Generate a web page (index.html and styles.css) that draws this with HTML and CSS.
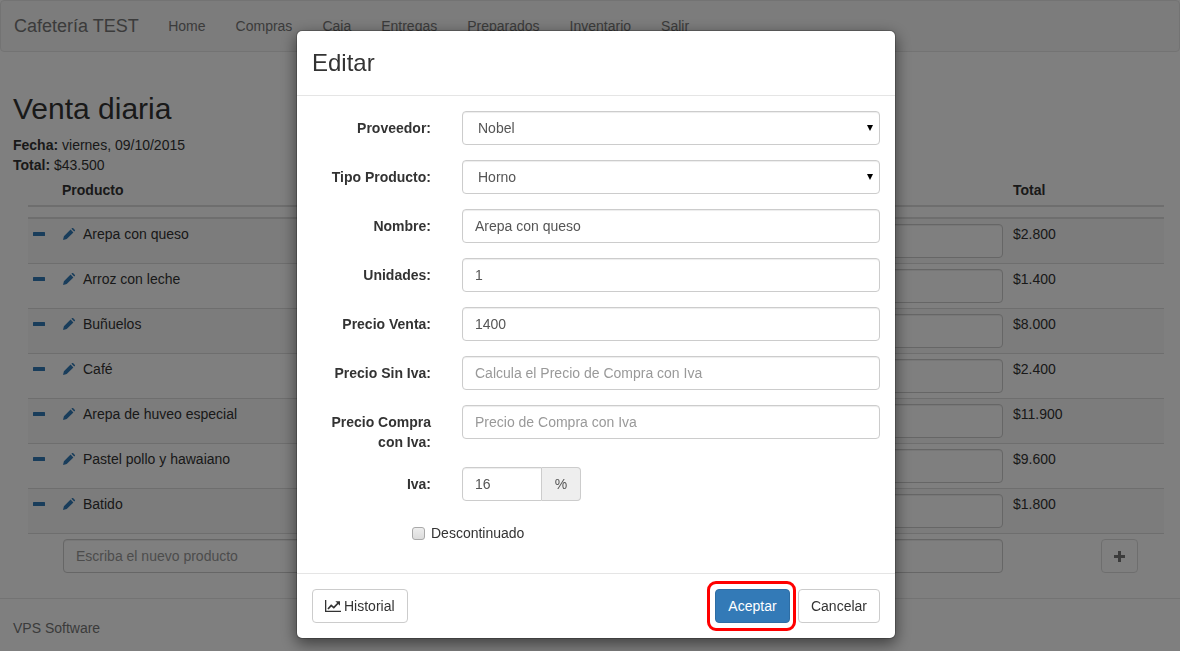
FILE: index.html
```html
<!DOCTYPE html>
<html lang="es">
<head>
<meta charset="utf-8">
<title>Venta diaria</title>
<link rel="stylesheet" href="styles.css">
</head>
<body>
<nav class="navbar">
  <a class="brand">Cafetería TEST</a>
  <ul class="nav">
    <li>Home</li><li>Compras</li><li>Caja</li><li>Entregas</li><li>Preparados</li><li>Inventario</li><li>Salir</li>
  </ul>
</nav>
<main class="content">
  <h1>Venta diaria</h1>
  <div class="meta"><b>Fecha:</b> viernes, 09/10/2015</div>
  <div class="meta"><b>Total:</b> $43.500</div>
  <table class="sales">
    <colgroup><col class="c-action"><col class="c-name"><col class="c-qty"><col class="c-total"></colgroup>
    <thead>
      <tr><th></th><th>Producto</th><th></th><th>Total</th></tr>
    </thead>
    <tbody>
      <tr class="spacer"><td colspan="4"></td></tr>
      <tr class="item first">
        <td><svg class="minus" viewBox="0 0 12 4"><rect width="12" height="4" rx=".5"/></svg></td>
        <td><svg class="pencil" viewBox="0 0 12 12"><path d="M0 12l.9-3.7L7.6 1.6l2.8 2.8-6.7 6.7zM8.4.8l.5-.5a1 1 0 0 1 1.4 0l1.4 1.4a1 1 0 0 1 0 1.4l-.5.5z"/></svg><span class="name">Arepa con queso</span></td>
        <td><input class="control" type="text"></td>
        <td>$2.800</td>
      </tr>
      <tr class="item">
        <td><svg class="minus" viewBox="0 0 12 4"><rect width="12" height="4" rx=".5"/></svg></td>
        <td><svg class="pencil" viewBox="0 0 12 12"><path d="M0 12l.9-3.7L7.6 1.6l2.8 2.8-6.7 6.7zM8.4.8l.5-.5a1 1 0 0 1 1.4 0l1.4 1.4a1 1 0 0 1 0 1.4l-.5.5z"/></svg><span class="name">Arroz con leche</span></td>
        <td><input class="control" type="text"></td>
        <td>$1.400</td>
      </tr>
      <tr class="item">
        <td><svg class="minus" viewBox="0 0 12 4"><rect width="12" height="4" rx=".5"/></svg></td>
        <td><svg class="pencil" viewBox="0 0 12 12"><path d="M0 12l.9-3.7L7.6 1.6l2.8 2.8-6.7 6.7zM8.4.8l.5-.5a1 1 0 0 1 1.4 0l1.4 1.4a1 1 0 0 1 0 1.4l-.5.5z"/></svg><span class="name">Buñuelos</span></td>
        <td><input class="control" type="text"></td>
        <td>$8.000</td>
      </tr>
      <tr class="item">
        <td><svg class="minus" viewBox="0 0 12 4"><rect width="12" height="4" rx=".5"/></svg></td>
        <td><svg class="pencil" viewBox="0 0 12 12"><path d="M0 12l.9-3.7L7.6 1.6l2.8 2.8-6.7 6.7zM8.4.8l.5-.5a1 1 0 0 1 1.4 0l1.4 1.4a1 1 0 0 1 0 1.4l-.5.5z"/></svg><span class="name">Café</span></td>
        <td><input class="control" type="text"></td>
        <td>$2.400</td>
      </tr>
      <tr class="item">
        <td><svg class="minus" viewBox="0 0 12 4"><rect width="12" height="4" rx=".5"/></svg></td>
        <td><svg class="pencil" viewBox="0 0 12 12"><path d="M0 12l.9-3.7L7.6 1.6l2.8 2.8-6.7 6.7zM8.4.8l.5-.5a1 1 0 0 1 1.4 0l1.4 1.4a1 1 0 0 1 0 1.4l-.5.5z"/></svg><span class="name">Arepa de huveo especial</span></td>
        <td><input class="control" type="text"></td>
        <td>$11.900</td>
      </tr>
      <tr class="item">
        <td><svg class="minus" viewBox="0 0 12 4"><rect width="12" height="4" rx=".5"/></svg></td>
        <td><svg class="pencil" viewBox="0 0 12 12"><path d="M0 12l.9-3.7L7.6 1.6l2.8 2.8-6.7 6.7zM8.4.8l.5-.5a1 1 0 0 1 1.4 0l1.4 1.4a1 1 0 0 1 0 1.4l-.5.5z"/></svg><span class="name">Pastel pollo y hawaiano</span></td>
        <td><input class="control" type="text"></td>
        <td>$9.600</td>
      </tr>
      <tr class="item">
        <td><svg class="minus" viewBox="0 0 12 4"><rect width="12" height="4" rx=".5"/></svg></td>
        <td><svg class="pencil" viewBox="0 0 12 12"><path d="M0 12l.9-3.7L7.6 1.6l2.8 2.8-6.7 6.7zM8.4.8l.5-.5a1 1 0 0 1 1.4 0l1.4 1.4a1 1 0 0 1 0 1.4l-.5.5z"/></svg><span class="name">Batido</span></td>
        <td><input class="control" type="text"></td>
        <td>$1.800</td>
      </tr>
      <tr class="add">
        <td></td>
        <td colspan="2" class="add-cell"><input class="control" type="text" placeholder="Escriba el nuevo producto"></td>
        <td><button class="btn add-btn" type="button"><svg class="plus" viewBox="0 0 11 11"><path d="M4 0h3v4h4v3H7v4H4V7H0V4h4z"/></svg></button></td>
      </tr>
    </tbody>
  </table>
</main>
<footer class="site-footer">VPS Software</footer>

<div class="backdrop"></div>
<section class="modal">
  <header class="modal-header"><h2>Editar</h2></header>
  <form class="modal-body">
    <div class="group">
      <label>Proveedor:</label>
      <div class="select-wrap"><select class="control select"><option>Nobel</option></select></div>
    </div>
    <div class="group">
      <label>Tipo Producto:</label>
      <div class="select-wrap"><select class="control select"><option>Horno</option></select></div>
    </div>
    <div class="group">
      <label>Nombre:</label>
      <input class="control" type="text" value="Arepa con queso">
    </div>
    <div class="group">
      <label>Unidades:</label>
      <input class="control" type="text" value="1">
    </div>
    <div class="group">
      <label>Precio Venta:</label>
      <input class="control" type="text" value="1400">
    </div>
    <div class="group">
      <label>Precio Sin Iva:</label>
      <input class="control" type="text" placeholder="Calcula el Precio de Compra con Iva">
    </div>
    <div class="group">
      <label>Precio Compra con Iva:</label>
      <input class="control" type="text" placeholder="Precio de Compra con Iva">
    </div>
    <div class="group">
      <label>Iva:</label>
      <div class="input-group">
        <input class="control" type="text" value="16">
        <span class="addon">%</span>
      </div>
    </div>
    <div class="check-row">
      <input class="check" type="checkbox" id="descontinuado">
      <span>Descontinuado</span>
    </div>
  </form>
  <footer class="modal-footer">
    <button class="btn history" type="button">
      <svg class="chart" viewBox="0 0 16 12"><path d="M0 0h1.3v10.7H16V12H0z"/><path class="chart-line" d="M3 9l3.2-3.6 2.6 2.2L13.2 3"/><path d="M10.4 1.2H15v4.6z"/></svg>
      <span>Historial</span>
    </button>
    <div class="actions">
      <button class="btn primary" type="button">Aceptar</button>
      <button class="btn" type="button">Cancelar</button>
    </div>
  </footer>
</section>
</body>
</html>
```
FILE: styles.css
```css
* { box-sizing: border-box; }
html, body { height: 100%; }
body {
  margin: 0;
  overflow: hidden;
  background: #fff;
  color: #333;
  font: 14px/20px "Liberation Sans", Arial, sans-serif;
}
.navbar {
  display: flex;
  align-items: center;
  height: 52px;
  padding-left: 13px;
  background: #f8f8f8;
  border: 1px solid #e7e7e7;
  border-radius: 4px;
}
.brand { font-size: 18px; color: #777; margin-right: 14.5px; }
.nav { display: flex; margin: 0; padding: 0; list-style: none; color: #777; }
.nav li { padding: 0 15px; }
.content { padding: 0 13px; }
h1 {
  margin: 40px 0 10px;
  font-size: 30px;
  font-weight: 400;
  line-height: 33px;
}
.sales {
  width: 1136px;
  margin-left: 15px;
  table-layout: fixed;
  border-collapse: separate;
  border-spacing: 0;
}
.c-action { width: 29px; }
.c-name { width: 643px; }
.c-qty { width: 308px; }
.c-total { width: 156px; }
th {
  padding: 5px;
  text-align: left;
  border-bottom: 2px solid #ddd;
}
td { padding: 5px; vertical-align: top; }
.spacer td { height: 12px; padding: 0; border-bottom: 2px solid #ddd; }
.item td { border-top: 1px solid #ddd; }
.item.first td { border-top: 0; }
.item:nth-child(even) td { background: #f9f9f9; }
.add td { border-top: 1px solid #ddd; }
.add-cell { padding-left: 6px; }
.control {
  display: block;
  width: 100%;
  height: 34px;
  padding: 6px 12px;
  color: #555;
  background: #fff;
  border: 1px solid #ccc;
  border-radius: 4px;
  font: inherit;
  box-shadow: inset 0 1px 1px rgba(0, 0, 0, .075);
  outline: 0;
}
.control::placeholder { color: #999; opacity: 1; }
.minus { display: block; width: 12px; height: 4px; margin-top: 8px; fill: #337ab7; }
.pencil { width: 12px; height: 12px; margin: 0 8px 0 1px; fill: #337ab7; vertical-align: -1px; }
.btn {
  display: inline-block;
  height: 34px;
  padding: 6px 12px;
  color: #333;
  background: #fff;
  border: 1px solid #ccc;
  border-radius: 4px;
  font: inherit;
  white-space: nowrap;
}
.add-btn {
  display: flex;
  align-items: center;
  justify-content: center;
  width: 37px;
  margin-left: 88px;
  padding: 0;
  opacity: .65;
}
.plus { width: 11px; height: 11px; fill: #333; }
.site-footer {
  margin-top: 20px;
  padding: 19px 13px 0;
  border-top: 1px solid #e7e7e7;
  color: #777;
}
.backdrop {
  position: fixed;
  inset: 0;
  background: rgba(0, 0, 0, .5);
}
.modal {
  position: fixed;
  left: 296px;
  top: 30px;
  width: 600px;
  height: 609px;
  display: flex;
  flex-direction: column;
  background: #fff;
  background-clip: padding-box;
  border: 1px solid rgba(0, 0, 0, .2);
  border-radius: 6px;
  box-shadow: 0 5px 15px rgba(0, 0, 0, .5);
}
.modal-header { padding: 15px; border-bottom: 1px solid #e5e5e5; }
.modal-header h2 { margin: 0; font-size: 24px; font-weight: 400; line-height: 34px; }
.modal-body { flex: 1; padding: 15px 15px 0; }
.group {
  display: grid;
  grid-template-columns: 119px 418px;
  column-gap: 31px;
  margin-bottom: 15px;
}
.group label { padding-top: 7px; text-align: right; font-weight: 700; }
.select-wrap { position: relative; }
.select { padding-left: 15px; appearance: none; -webkit-appearance: none; }
.select-wrap::after {
  content: "";
  position: absolute;
  right: 7px;
  top: 14px;
  border-style: solid;
  border-width: 6px 3px 0;
  border-color: #000 transparent transparent;
}
.input-group { display: flex; width: 119px; }
.input-group .control { width: 80px; border-radius: 4px 0 0 4px; }
.addon {
  flex: 1;
  padding: 6px 0;
  text-align: center;
  color: #555;
  background: #eee;
  border: 1px solid #ccc;
  border-left: 0;
  border-radius: 0 4px 4px 0;
}
.check-row {
  display: flex;
  align-items: center;
  gap: 6px;
  padding: 7px 0 0 100px;
}
.check {
  appearance: none;
  -webkit-appearance: none;
  width: 13px;
  height: 13px;
  margin: 0;
  background: linear-gradient(#ededed, #dcdcdc);
  border: 1px solid #a9a9a9;
  border-radius: 3px;
}
.modal-footer {
  display: flex;
  justify-content: space-between;
  padding: 15px;
  border-top: 1px solid #e5e5e5;
}
.actions { display: flex; gap: 8px; }
.primary {
  position: relative;
  width: 75px;
  padding: 6px 0;
  color: #fff;
  background: #337ab7;
  border-color: #2e6da4;
}
.primary::after {
  content: "";
  position: absolute;
  left: -9px;
  right: -7px;
  top: -9px;
  bottom: -9px;
  border: 3px solid #f00;
  border-radius: 9px;
}
.history { display: flex; align-items: center; gap: 3px; width: 96px; }
.chart { width: 16px; height: 12px; fill: #333; flex: none; }
.chart-line { fill: none; stroke: #333; stroke-width: 1.7; }
```
